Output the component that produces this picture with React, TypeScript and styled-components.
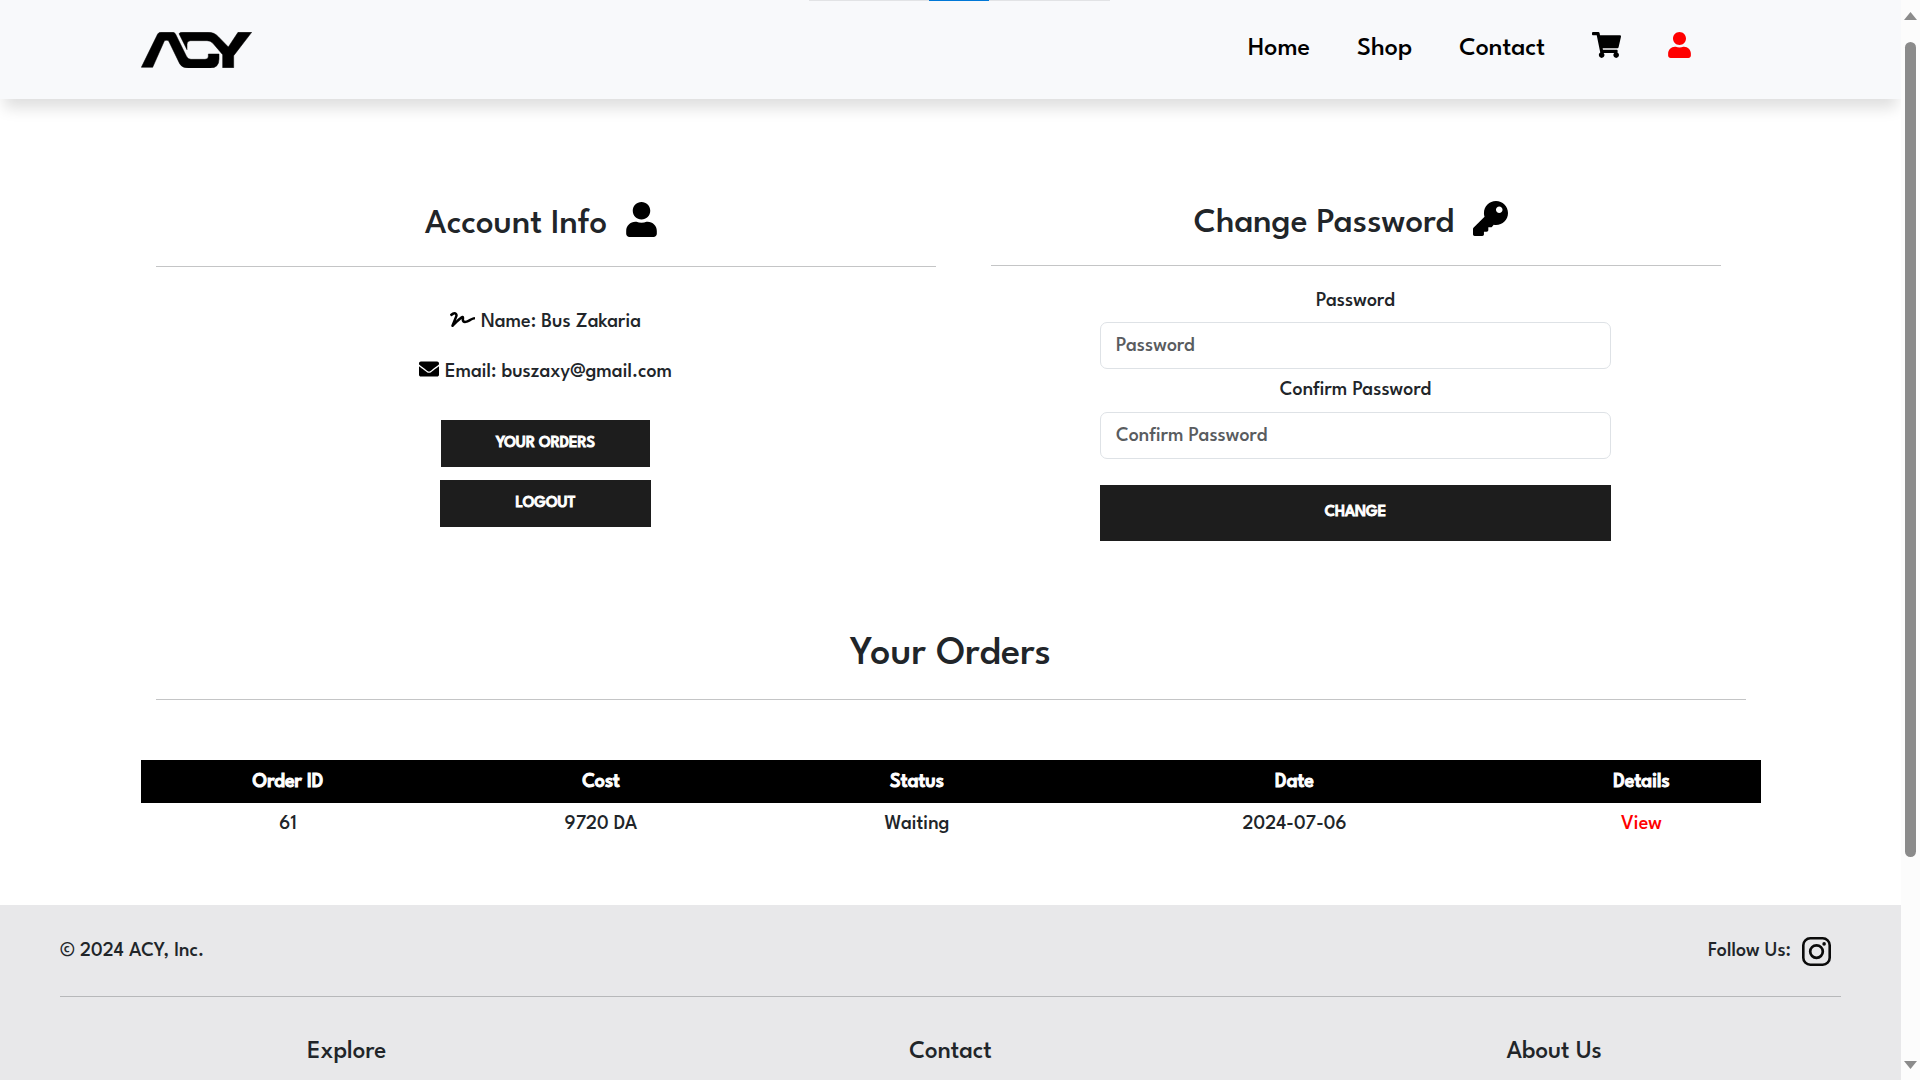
import React from "react";
import styled, { createGlobalStyle, css } from "styled-components";
import { FaEnvelope, FaKey, FaShoppingCart, FaSignature, FaUser } from "react-icons/fa";

const GlobalStyle = createGlobalStyle`
  * { box-sizing: border-box; }
  body {
    margin: 0;
    background: #fff;
    color: #212529;
    font-family: "League Spartan", Lato, "Liberation Sans", sans-serif;
    font-size: 20px;
    font-weight: 500;
    line-height: 32px;
    overflow: hidden;
  }
`;

const emboldened = css`
  font-weight: 500;
  -webkit-text-stroke: 1px currentColor;
`;

const Screen = styled.div`
  display: grid;
  grid-template-columns: 1fr 19px;
  width: 1920px;
  height: 1080px;
  overflow: hidden;
`;

const Page = styled.div`
  position: relative;
  display: flex;
  flex-direction: column;
  min-width: 0;
  overflow: hidden;
`;

const LoadingTrack = styled.div`
  position: absolute;
  z-index: 2;
  top: 0;
  left: 809px;
  display: flex;
  width: 301px;
  height: 1px;
  padding-left: 120px;
  background: #e2e3e5;
`;

const LoadingBar = styled.div`
  width: 60px;
  background: #0078d7;
`;

const Header = styled.header`
  z-index: 1;
  display: flex;
  flex: none;
  justify-content: space-between;
  align-items: flex-start;
  height: 99px;
  padding: 31px 210px 0 141px;
  background: #f8f9fb;
  box-shadow: 0 13px 14px -4px rgba(0, 0, 0, 0.13);
`;

const Logo = styled.svg`
  width: 111px;
  height: 36px;
  margin-top: 1px;
  stroke: #000;
  stroke-width: 1.5;
`;

const Nav = styled.nav`
  display: flex;
  gap: 47px;
  color: #000;
  font-size: 26px;
  line-height: 36px;

  svg {
    height: 26px;
    margin-top: 1px;
  }
`;

const NavLink = styled.a`
  white-space: nowrap;
`;

const NavIcon = styled.span<{ $color?: string; $width: number }>`
  display: flex;
  width: ${(p) => p.$width}px;
  color: ${(p) => p.$color ?? "#000"};
  svg { width: 100%; }
`;

const Columns = styled.section`
  display: flex;
  gap: 55px;
  flex: none;
  height: 529px;
  padding: 102px 0 0 156px;
`;

const Panel = styled.div<{ $width: number; $drop?: number }>`
  display: flex;
  flex-direction: column;
  align-items: center;
  width: ${(p) => p.$width}px;
  padding-top: ${(p) => p.$drop ?? 0}px;
`;

const PanelTitle = styled.h3`
  display: flex;
  align-items: flex-start;
  gap: 19px;
  height: 38px;
  margin: 0 10px 26px 0;
  font-size: 35px;
  font-weight: 500;
  line-height: 45px;
  white-space: nowrap;

  svg {
    color: #000;
    height: 35px;
  }
`;

const Rule = styled.div<{ $color?: string }>`
  flex: none;
  align-self: stretch;
  height: 1px;
  background: ${(p) => p.$color ?? "#c4c5c6"};
`;

const Details = styled.div`
  display: flex;
  flex-direction: column;
  align-items: center;
  gap: 22px;
  margin: 39px 1px 36px 0;
`;

const Detail = styled.div<{ $iconTop: number }>`
  display: flex;
  align-items: flex-start;
  gap: 6px;
  height: 28px;
  white-space: nowrap;
  svg {
    color: #000;
    flex: none;
    margin-top: ${(p) => p.$iconTop}px;
  }
`;

const Button = styled.button<{ $width: number; $tall?: boolean }>`
  flex: none;
  width: ${(p) => p.$width}px;
  height: ${(p) => (p.$tall ? 56 : 47)}px;
  padding: ${(p) => (p.$tall ? 0 : 1)}px 0 0;
  border: 0;
  background: #1d1d1d;
  color: #fff;
  font: 500 16px/24px "League Spartan", Lato, sans-serif;
  ${emboldened}
`;

const Stack = styled.div`
  display: flex;
  flex-direction: column;
  align-items: center;
  gap: 13px;
  margin-right: 1px;
`;

const Form = styled.form`
  display: flex;
  flex-direction: column;
  align-items: center;
  width: 511px;
  margin-right: 1px;
  padding-top: 19px;
`;

const FieldLabel = styled.label<{ $gap: number }>`
  margin-bottom: ${(p) => p.$gap}px;
  height: 28px;
`;

const Input = styled.input<{ $gap: number }>`
  width: 511px;
  height: 47px;
  margin: 0 0 ${(p) => p.$gap}px;
  padding: 0 15px;
  border: 1px solid #dee2e6;
  border-radius: 7px;
  background: #fff;
  font: 500 20px/30px "League Spartan", Lato, sans-serif;
  &::placeholder {
    color: #595c5f;
    opacity: 1;
  }
`;

const Orders = styled.section`
  display: flex;
  flex: none;
  flex-direction: column;
  align-items: center;
  height: 277px;
  padding: 0 155px 0 156px;
`;

const OrdersTitle = styled.h2`
  height: 44px;
  margin: 0 1px 27px 0;
  font-size: 40px;
  font-weight: 500;
  line-height: 53px;
`;

const Table = styled.div`
  width: 1620px;
  margin-top: 60px;
`;

const Row = styled.div`
  display: grid;
  grid-template-columns: 294px 332px 300px 455px 239px;
  height: 43px;
  padding-top: 5px;
  text-align: center;
`;

const HeadRow = styled(Row)`
  padding-top: 6px;
  background: #000;
  color: #fff;
  ${emboldened}
`;

const ViewLink = styled.a`
  color: #f00;
`;

const Footer = styled.footer`
  flex: 1;
  padding: 30px 60px 0;
  background: #e8e8ea;
`;

const FooterTop = styled.div`
  display: flex;
  justify-content: space-between;
  height: 61px;
`;

const Follow = styled.div`
  display: flex;
  gap: 10px;
  margin-right: 9px;
  svg {
    width: 31px;
    height: 31px;
    margin-top: 1px;
  }
`;

const FooterColumns = styled.div`
  display: grid;
  grid-template-columns: repeat(3, 1fr);
  margin: 38px -15px 0;
  font-size: 25px;
  line-height: 34px;
  text-align: center;
`;

const Scrollbar = styled.aside`
  display: flex;
  flex-direction: column;
  align-items: center;
  background: #fcfcfc;
  padding: 12px 0 11px;
`;

const Thumb = styled.div`
  width: 11px;
  height: 815px;
  margin: 22px 0 auto;
  border-radius: 6px;
  background: #8b8b8b;
`;

const Arrow = styled.div<{ $down?: boolean }>`
  width: 13px;
  height: 8px;
  background: #8b8b8b;
  clip-path: ${(p) => (p.$down ? "polygon(0 0, 100% 0, 50% 100%)" : "polygon(50% 0, 100% 100%, 0 100%)")};
`;

function LogoMark() {
  return (
    <Logo viewBox="64 65 333 108" preserveAspectRatio="none" aria-label="ACY">
      <path d="M65 171 L114 71 Q117 66 123 66 H160 Q165 66 168 72 L200 137 Q205 147 214 147 H256 Q266 147 266 138 V131 H298 V146 Q298 173 272 173 H206 Q188 173 180 160 L148 94 Q146 90 142 90 H139 Q135 90 133 94 L99 171 Z" />
      <path d="M178 70 Q180 66 190 66 H265 Q284 66 296 79 L326 110 L355 66 H396 L342 136 V172 H309 V133 L279 98 Q272 91 262 91 H213 Q202 91 202 102 V118 Z" />
    </Logo>
  );
}

function InstagramMark() {
  return (
    <svg viewBox="0 0 31 31" fill="none" stroke="#0b0b0b">
      <rect x="2.3" y="2.3" width="26.4" height="26.4" rx="7" strokeWidth="2.6" />
      <circle cx="15.5" cy="15.6" r="6.3" strokeWidth="2.7" />
      <circle cx="23.1" cy="7.9" r="1.8" fill="#0b0b0b" stroke="none" />
    </svg>
  );
}

const columns = ["Order ID", "Cost", "Status", "Date", "Details"];
const order = ["61", "9720 DA", "Waiting", "2024-07-06"];
const footerSections = ["Explore", "Contact", "About Us"];

export default function App() {
  return (
    <Screen>
      <GlobalStyle />
      <Page>
        <LoadingTrack>
          <LoadingBar />
        </LoadingTrack>
        <Header>
          <LogoMark />
          <Nav>
            <NavLink>Home</NavLink>
            <NavLink>Shop</NavLink>
            <NavLink>Contact</NavLink>
            <NavIcon $width={29}><FaShoppingCart /></NavIcon>
            <NavIcon $width={23} $color="#f00"><FaUser /></NavIcon>
          </Nav>
        </Header>

        <Columns>
          <Panel $width={780} $drop={1}>
            <PanelTitle>
              Account Info
              <FaUser size={31} />
            </PanelTitle>
            <Rule />
            <Details>
              <Detail $iconTop={1}>
                <FaSignature size={25} />
                Name: Bus Zakaria
              </Detail>
              <Detail $iconTop={3}>
                <FaEnvelope size={20} />
                Email: buszaxy@gmail.com
              </Detail>
            </Details>
            <Stack>
              <Button $width={209}>YOUR ORDERS</Button>
              <Button $width={211}>LOGOUT</Button>
            </Stack>
          </Panel>

          <Panel $width={730}>
            <PanelTitle>
              Change Password
              <FaKey size={35} />
            </PanelTitle>
            <Rule />
            <Form>
              <FieldLabel $gap={9}>Password</FieldLabel>
              <Input type="password" placeholder="Password" $gap={5} />
              <FieldLabel $gap={10}>Confirm Password</FieldLabel>
              <Input type="password" placeholder="Confirm Password" $gap={26} />
              <Button type="button" $width={511} $tall>CHANGE</Button>
            </Form>
          </Panel>
        </Columns>

        <Orders>
          <OrdersTitle>Your Orders</OrdersTitle>
          <Rule />
          <Table>
            <HeadRow>
              {columns.map((text) => (
                <div key={text}>{text}</div>
              ))}
            </HeadRow>
            <Row>
              {order.map((text) => (
                <div key={text}>{text}</div>
              ))}
              <div><ViewLink>View</ViewLink></div>
            </Row>
          </Table>
        </Orders>

        <Footer>
          <FooterTop>
            <div>© 2024 ACY, Inc.</div>
            <Follow>
              Follow Us:
              <InstagramMark />
            </Follow>
          </FooterTop>
          <Rule $color="#b7b8ba" />
          <FooterColumns>
            {footerSections.map((text) => (
              <div key={text}>{text}</div>
            ))}
          </FooterColumns>
        </Footer>
      </Page>
      <Scrollbar>
        <Arrow />
        <Thumb />
        <Arrow $down />
      </Scrollbar>
    </Screen>
  );
}
